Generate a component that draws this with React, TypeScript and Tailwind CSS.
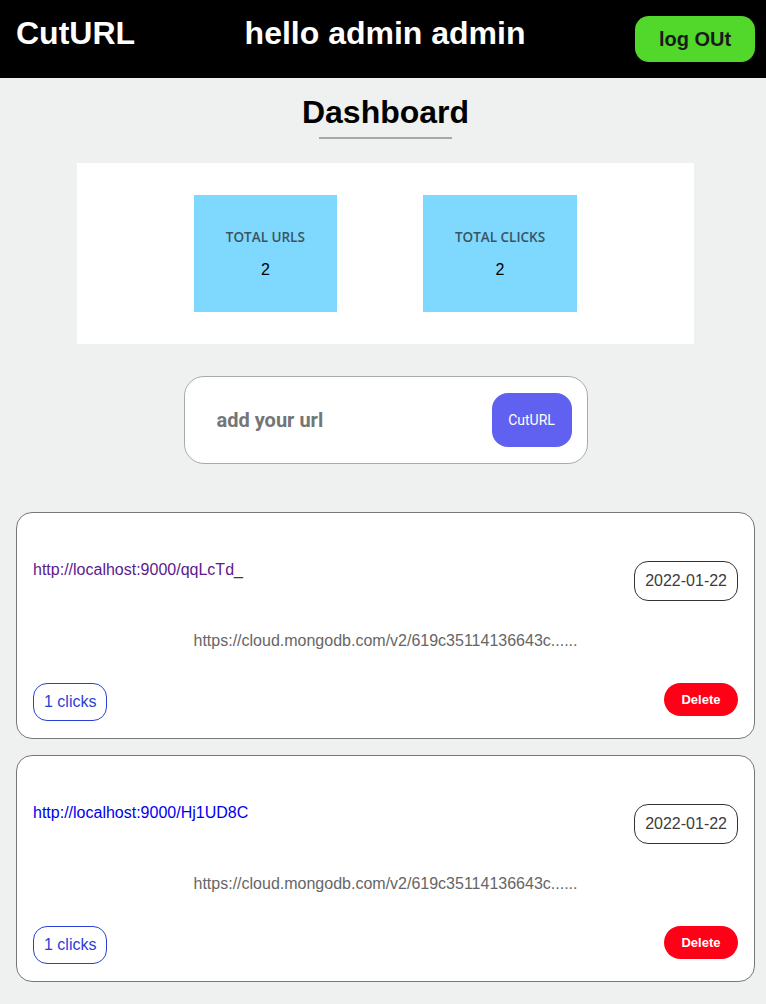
import React from 'react';

type UrlItem = {
  short: string;
  long: string;
  date: string;
  clicks: number;
  visited: boolean;
};

const urls: UrlItem[] = [
  {
    short: 'http://localhost:9000/qqLcTd_',
    long: 'https://cloud.mongodb.com/v2/619c35114136643c......',
    date: '2022-01-22',
    clicks: 1,
    visited: true,
  },
  {
    short: 'http://localhost:9000/Hj1UD8C',
    long: 'https://cloud.mongodb.com/v2/619c35114136643c......',
    date: '2022-01-22',
    clicks: 1,
    visited: false,
  },
];

function StatBox({ label, value }: { label: string; value: number }) {
  return (
    <div className="bg-[#7fd8fd] px-8 pt-[33px] pb-[33px] flex flex-col items-center">
      <p className="text-[13.5px] leading-[18px] font-semibold text-[#3a5363] font-['Open_Sans',sans-serif]">
        {label}
      </p>
      <p className="mt-[15px] text-[16px] leading-[18px] text-black">{value}</p>
    </div>
  );
}

function UrlCard({ item }: { item: UrlItem }) {
  return (
    <div className="bg-white border border-[#777] rounded-[16px] pl-[16px] pr-[16px] pt-[48px] pb-[17px]">
      {/* top row */}
      <div className="flex items-start justify-between">
        <a
          href="#"
          className={
            item.visited
              ? 'text-[16px] leading-[18px] text-[#5c1a8e]'
              : 'text-[16px] leading-[18px] text-[#0000ee]'
          }
        >
          {item.short}
        </a>
        <span className="border border-[#333] rounded-[14px] h-[40px] px-[10px] flex items-center text-[16px] text-[#3c3c3c]">
          {item.date}
        </span>
      </div>

      <p className="mt-[31px] text-center text-[16px] leading-[18px] text-[#666]">{item.long}</p>

      {/* bottom row */}
      <div className="mt-[33px] flex items-start justify-between">
        <span className="border border-[#2a3fd6] rounded-[14px] h-[38px] px-[10px] flex items-center text-[16px] text-[#2a3fd6]">
          {item.clicks} clicks
        </span>
        <button className="bg-[#ff0016] text-white font-bold text-[13px] rounded-full w-[74px] h-[33px]">
          Delete
        </button>
      </div>
    </div>
  );
}

export default function App() {
  return (
    <div className="min-h-screen bg-[#eff0f0] font-['Liberation_Sans',Arial,sans-serif]">
      {/* Header */}
      <header className="bg-black h-[78px] pl-4 pr-[11px] pt-4 flex items-start justify-between">
        <h1 className="text-white font-bold text-[32px] leading-[34px]">CutURL</h1>
        <h2 className="text-white font-bold text-[32px] leading-[34px]">hello admin admin</h2>
        <button className="bg-[#52d72b] text-[#1a1a1a] font-bold text-[20px] rounded-[14px] w-[120px] h-[46px]">
          log OUt
        </button>
      </header>

      {/* Main */}
      <main className="pl-[5px] pb-[23px] flex flex-col items-center">
        <h1 className="mt-4 text-[32px] leading-[37px] font-bold text-black">Dashboard</h1>
        <div className="mt-[6px] w-[133px] h-[2px] bg-[#a8a8a8]"></div>

        <div className="mt-6 w-[617px] bg-white py-8 flex justify-center gap-[86px]">
          <StatBox label="TOTAL URLS" value={2} />
          <StatBox label="TOTAL CLICKS" value={2} />
        </div>

        <div className="mt-8 w-[404px] h-[88px] bg-white border border-[#aaa] rounded-[20px] pl-[32px] pr-[15px] flex items-center justify-between font-['Roboto',sans-serif]">
          <input
            type="text"
            placeholder="add your url"
            className="w-[250px] outline-none bg-transparent text-[20px] font-bold placeholder:text-[#757575]"
          />
          <button className="bg-[#6161f1] text-white text-[14px] rounded-[16px] w-[80px] h-[54px]">
            CutURL
          </button>
        </div>

        <div className="mt-12 self-stretch mx-[11px] flex flex-col gap-4">
          {urls.map((u) => (
            <UrlCard key={u.short} item={u} />
          ))}
        </div>
      </main>
    </div>
  );
}
